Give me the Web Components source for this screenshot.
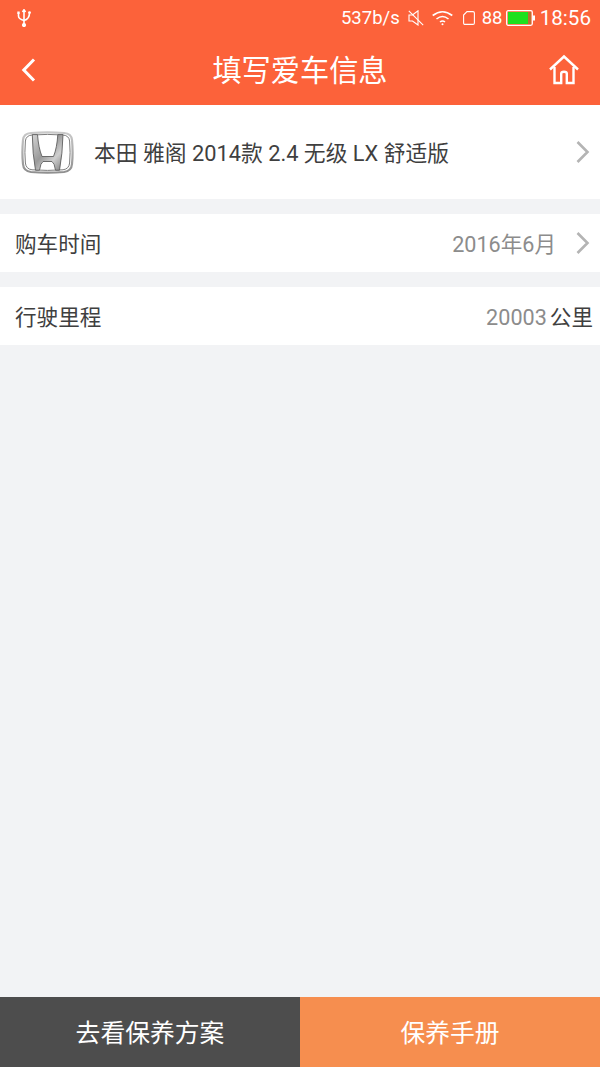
<!DOCTYPE html>
<html lang="zh">
<head>
<meta charset="utf-8">
<title>填写爱车信息</title>
<style>
  html, body { margin: 0; height: 100%; }
  body { font-family: Roboto, "Noto Sans CJK SC", sans-serif; background: #f2f3f5; }
  #app { display: flex; flex-direction: column; height: 1067px; overflow: hidden; }
</style>
</head>
<body>
<div id="app">
  <app-header title="填写爱车信息"></app-header>
  <car-row name="本田 雅阁 2014款 2.4 无级 LX 舒适版"></car-row>
  <info-row label="购车时间" value="2016年6月" arrow style="margin-top:15px"></info-row>
  <info-row label="行驶里程" value="20003" unit="公里" style="margin-top:15px"></info-row>
  <bottom-bar style="margin-top:auto"></bottom-bar>
</div>

<script>
const arrow = `<svg width="16" height="26" viewBox="0 0 16 26" fill="none"><path d="M2.5 3 L12.5 13 L2.5 23" stroke="#b4b4b4" stroke-width="2.6"/></svg>`;

class AppHeader extends HTMLElement {
  constructor() {
    super();
    this.attachShadow({ mode: "open" });
    this.shadowRoot.innerHTML = `
      <style>
        :host { display:block; height:105px; background:#fc623a; color:#fff; flex:none; }
        .status { height:35px; display:flex; align-items:center; padding:0 9px 0 16px; font-size:18.5px; }
        .status .space { flex:1; }
        .status svg { display:block; }
        .nav { height:70px; display:flex; align-items:center; justify-content:space-between; padding:0 20px; position:relative; }
        h1 { position:absolute; left:0; right:0; top:17px; margin:0; text-align:center; font-size:29.2px; line-height:38px; font-weight:400; }
        .back { margin-bottom:1px; }
      </style>
      <div class="status">
        <svg width="16" height="18" viewBox="0 0 16 18" fill="none" stroke="#fff" stroke-width="1.6">
          <path d="M8 1 V16"/><path d="M2.5 4 V7 Q2.5 10 8 11.5 Q13.5 10 13.5 4"/>
          <circle cx="8" cy="16" r="1.3" fill="#fff"/><path d="M6.5 3 L8 .8 L9.5 3" fill="#fff"/>
          <rect x="1.3" y="2.5" width="2.4" height="2.4" fill="#fff" stroke="none"/><circle cx="13.5" cy="3.6" r="1.4" fill="#fff" stroke="none"/>
        </svg>
        <span class="space"></span>
        <span style="margin-right:8px">537b/s</span>
        <svg style="margin-right:8px" width="16" height="16" viewBox="0 0 16 16" fill="none" stroke="#fff" stroke-width="1.1">
          <path d="M1 5 H4.5 L10 .8 V15 L4.5 11 H1 Z"/><path d="M.8 .8 L15.2 15.2"/>
        </svg>
        <svg style="margin-right:10px" width="21" height="16" viewBox="0 0 21 16" fill="none" stroke="#fff" stroke-width="1.6">
          <path d="M.7 5.5 Q10.5 -2 20.3 5.5"/><path d="M4.5 9 Q10.5 4 16.5 9"/><path d="M8 12 Q10.5 10 13 12"/>
          <circle cx="10.5" cy="14.3" r="1" fill="#fff" stroke="none"/>
        </svg>
        <svg style="margin-right:7px" width="12" height="14" viewBox="0 0 12 14" fill="none" stroke="#fff" stroke-width="1.1">
          <path d="M4 .6 H10 Q11.4 .6 11.4 2 V12 Q11.4 13.4 10 13.4 H2 Q.6 13.4 .6 12 V4 Z"/>
        </svg>
        <span style="width:20px;margin-right:4px">88</span>
        <svg style="margin-right:5px" width="29" height="16" viewBox="0 0 29 16">
          <rect x=".7" y=".7" width="25.6" height="14.6" rx="1.5" fill="none" stroke="#fff" stroke-width="1.3"/>
          <rect x="2" y="2" width="20" height="12" fill="#1ee01e"/><rect x="22" y="2" width="3" height="12" fill="#b9702f"/>
          <rect x="27" y="5.5" width="2" height="5" fill="#fff"/>
        </svg>
        <span style="font-size:20.6px">18:56</span>
      </div>
      <div class="nav">
        <svg class="back" width="18" height="26" viewBox="0 0 18 26" fill="none"><path d="M14 2.5 L3.8 13 L14 23.5" stroke="#fff" stroke-width="3"/></svg>
        <h1>${this.getAttribute("title")}</h1>
        <svg width="32" height="32" viewBox="0 0 32 32" fill="none" stroke="#fff" stroke-width="2.4">
          <path d="M2 15.5 L16 2.5 L30 15.5"/><path d="M6.5 13 V29 H13.2 V19.5 Q13.2 17.8 16 17.8 Q18.8 17.8 18.8 19.5 V29 H25.5 V13"/>
        </svg>
      </div>`;
  }
}
customElements.define("app-header", AppHeader);

class CarRow extends HTMLElement {
  constructor() {
    super();
    this.attachShadow({ mode: "open" });
    this.shadowRoot.innerHTML = `
      <style>
        :host { display:flex; height:94px; background:#fff; align-items:center; padding:0 9px 0 21px; flex:none; }
        span { flex:1; margin-left:20px; font-size:21.8px; color:#3f3f3f; white-space:nowrap; padding-bottom:2px; }
        svg { display:block; }
      </style>
      <svg width="53" height="44" viewBox="0 0 53 44" fill="none">
        <defs>
          <linearGradient id="m" x1="0" y1="0" x2="1" y2="1">
            <stop offset="0" stop-color="#d4d4d4"/><stop offset=".45" stop-color="#9a9a9a"/><stop offset=".7" stop-color="#cfcfcf"/><stop offset="1" stop-color="#7f7f7f"/>
          </linearGradient>
          <linearGradient id="r" x1="0" y1="0" x2="0" y2="1">
            <stop offset="0" stop-color="#c9c9c9"/><stop offset="1" stop-color="#8f8f8f"/>
          </linearGradient>
        </defs>
        <path d="M10 3 Q26.5 1.6 43 3 Q50.5 3.6 51 10 Q52.2 23 51 34 Q50.5 41 43 42 Q26.5 43.4 10 42 Q2.5 41 2 34 Q.8 23 2 10 Q2.5 3.6 10 3 Z" stroke="url(#r)" stroke-width="2.2" fill="#fff"/>
        <path d="M11 5 Q26.5 3.8 42 5 Q48 5.5 48.6 11 Q49.6 23 48.6 33 Q48 39 42 39.8 Q26.5 41 11 39.8 Q5 39 4.4 33 Q3.4 23 4.4 11 Q5 5.5 11 5 Z" stroke="#7d7d7d" stroke-width="1"/>
        <path d="M11.3 4.6 H16.5 Q17.5 18 21 26.5 H32.5 Q36 18 36.8 4.6 H42 Q41.5 24 38.5 40.2 H34.5 Q33.5 33 31 31.5 H22 Q19.5 33 18.5 40.2 H14.5 Q11.5 24 11.3 4.6 Z" fill="url(#m)" stroke="#5f5f5f" stroke-width=".9"/>
      </svg>
      <span>${this.getAttribute("name")}</span>
      ${arrow}`;
  }
}
customElements.define("car-row", CarRow);

class InfoRow extends HTMLElement {
  constructor() {
    super();
    this.attachShadow({ mode: "open" });
    const unit = this.getAttribute("unit");
    this.shadowRoot.innerHTML = `
      <style>
        :host { display:flex; height:58px; background:#fff; align-items:center; padding:0 7px 0 15px; flex:none; font-size:21.6px; color:#3f3f3f; }
        .label, .right { padding-bottom:2px; }
        .label { flex:1; }
        .value { color:#8c8c8c; }
        .unit { margin-left:3px; }
        svg { display:block; margin-left:19px; margin-right:2px; }
      </style>
      <span class="label">${this.getAttribute("label")}</span>
      <span class="right"><span class="value">${this.getAttribute("value")}</span>${unit ? `<span class="unit">${unit}</span>` : ""}</span>
      ${this.hasAttribute("arrow") ? arrow : ""}`;
  }
}
customElements.define("info-row", InfoRow);

class BottomBar extends HTMLElement {
  constructor() {
    super();
    this.attachShadow({ mode: "open" });
    this.shadowRoot.innerHTML = `
      <style>
        :host { display:grid; grid-template-columns:1fr 1fr; height:70px; flex:none; color:#fff; font-size:24.8px; }
        div { display:flex; align-items:center; justify-content:center; padding-bottom:3px; }
        .a { background:#4d4d4d; }
        .b { background:#f68e4f; }
      </style>
      <div class="a">去看保养方案</div>
      <div class="b">保养手册</div>`;
  }
}
customElements.define("bottom-bar", BottomBar);
</script>
</body>
</html>
